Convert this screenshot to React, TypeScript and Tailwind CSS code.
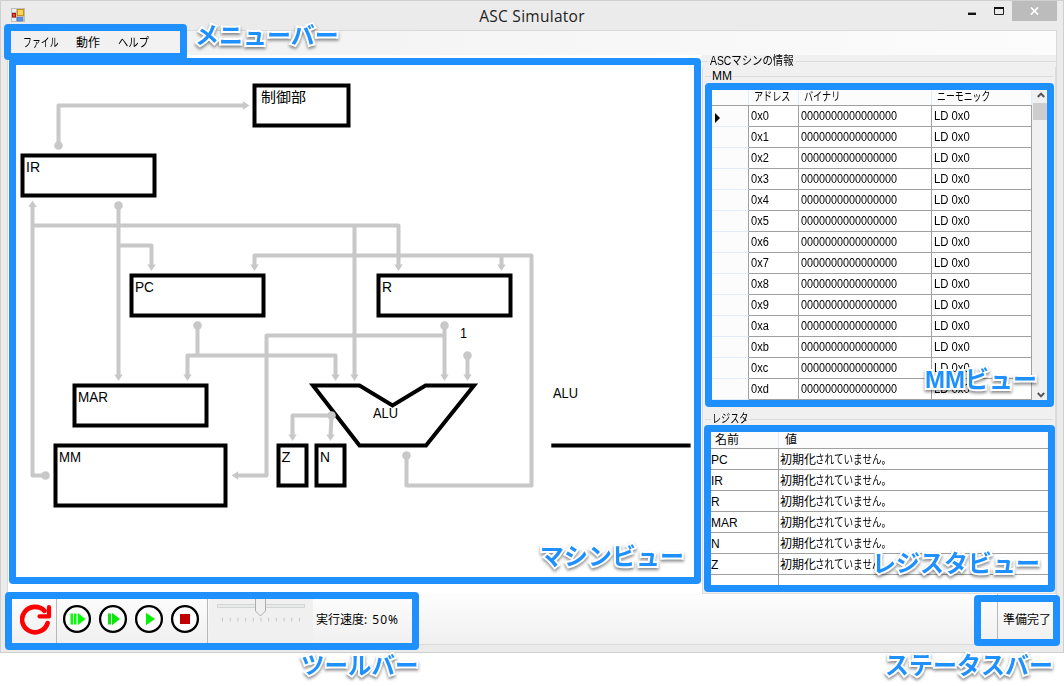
import React from "react";

type Point = [number, number];

const addresses = ["0x0", "0x1", "0x2", "0x3", "0x4", "0x5", "0x6", "0x7", "0x8", "0x9", "0xa", "0xb", "0xc", "0xd"];
const registers = ["PC", "IR", "R", "MAR", "N", "Z"];

/* ---------- machine diagram ---------- */

const nodes: { label: string; x: number; y: number; w: number; h: number; tx: number; ty: number; tw: number }[] = [
  { label: "制御部", x: 254.5, y: 85.5, w: 94, h: 40, tx: 261, ty: 102, tw: 45 },
  { label: "IR", x: 22.5, y: 155.5, w: 132, h: 40, tx: 26, ty: 172, tw: 14 },
  { label: "PC", x: 131.5, y: 275.5, w: 132, h: 40, tx: 135, ty: 292, tw: 19 },
  { label: "R", x: 378.5, y: 275.5, w: 132, h: 40, tx: 382, ty: 292, tw: 10 },
  { label: "MAR", x: 74.5, y: 385.5, w: 132, h: 40, tx: 78, ty: 402, tw: 30 },
  { label: "MM", x: 55.5, y: 445.5, w: 170, h: 60, tx: 59, ty: 462, tw: 22 },
  { label: "Z", x: 278.5, y: 445.5, w: 28, h: 40, tx: 281.5, ty: 462, tw: 9 },
  { label: "N", x: 316.5, y: 445.5, w: 28, h: 40, tx: 320, ty: 462, tw: 10 },
];

const wires: Point[][] = [
  [[58.5, 145.5], [58.5, 105.5], [244, 105.5]],
  [[45.5, 475.5], [32.5, 475.5], [32.5, 206]],
  [[32.5, 225.5], [398.5, 225.5], [398.5, 266]],
  [[354.5, 225.5], [354.5, 376]],
  [[118.5, 205.5], [118.5, 376]],
  [[118.5, 245.5], [151.5, 245.5], [151.5, 266]],
  [[406.5, 455.5], [406.5, 485.5], [531.5, 485.5], [531.5, 255.5], [254.5, 255.5], [254.5, 266]],
  [[501.5, 255.5], [501.5, 266]],
  [[197.5, 325.5], [197.5, 355.5]],
  [[187.5, 376], [187.5, 355.5], [335.5, 355.5], [335.5, 376]],
  [[444.5, 325.5], [444.5, 376]],
  [[444.5, 335.5], [266.5, 335.5], [266.5, 475.5], [238, 475.5]],
  [[467.5, 355.5], [467.5, 376]],
  [[331.5, 415.5], [292.5, 415.5], [292.5, 436]],
  [[331.5, 415.5], [330.5, 436]],
];

const dots: Point[] = [
  [58.5, 145.5], [45.5, 475.5], [118.5, 205.5], [406.5, 455.5], [197.5, 325.5], [444.5, 325.5], [467.5, 355.5], [331.5, 415.5],
];

const arrows: [number, number, number][] = [
  [249.5, 105.5, -90], [32.5, 200.5, 180], [398.5, 271, 0], [354.5, 381, 0], [118.5, 381, 0], [151.5, 271, 0],
  [254.5, 271, 0], [501.5, 271, 0], [187.5, 381, 0], [335.5, 381, 0], [444.5, 381, 0], [231.5, 475.5, 90],
  [467.5, 381, 0], [292.5, 441, 0], [330.5, 441, 0],
];

function MachineDiagram() {
  return (
    <svg
      className="block font-['Liberation_Sans','Noto_Sans_CJK_JP',sans-serif] text-[14px]"
      width="686"
      height="532"
      viewBox="8 55 686 532"
    >
      <g fill="none" stroke="#000" strokeWidth="4">
        {nodes.map((n) => (
          <rect key={n.label} x={n.x} y={n.y} width={n.w} height={n.h} />
        ))}
        <path d="M313 385.5H359.5L392.5 405.5L425.5 385.5H474L426 445.5H359.5Z" strokeLinejoin="miter" strokeMiterlimit="3" />
        <path d="M551.3 445.5H690.6" />
      </g>
      <g fill="none" stroke="#c8c8c8" strokeWidth="4" strokeLinejoin="round">
        {wires.map((w, i) => (
          <polyline key={i} points={w.map((p) => p.join(",")).join(" ")} />
        ))}
      </g>
      <g fill="#c8c8c8">
        {dots.map(([x, y], i) => (
          <circle key={i} cx={x} cy={y} r="4.3" />
        ))}
        {arrows.map(([x, y, a], i) => (
          <path key={i} d="M0 0L-4.2 -6.6H4.2Z" transform={`translate(${x} ${y}) rotate(${a})`} />
        ))}
      </g>
      {nodes.map((n) => (
        <text key={n.label} x={n.tx} y={n.ty} textLength={n.tw} lengthAdjust="spacingAndGlyphs">
          {n.label}
        </text>
      ))}
      <text x="373" y="418" textLength="25" lengthAdjust="spacingAndGlyphs">ALU</text>
      <text x="553" y="398" textLength="25" lengthAdjust="spacingAndGlyphs">ALU</text>
      <text x="460" y="338" textLength="7" lengthAdjust="spacingAndGlyphs">1</text>
    </svg>
  );
}

/* ---------- chrome ---------- */

function AppIcon() {
  return (
    <svg className="block" width="14" height="14" viewBox="0 0 14 14">
      <rect width="14" height="14" fill="#bdbdbd" />
      <rect x="1" y="1" width="4" height="3" fill="#eee" />
      <rect x="1" y="10" width="4" height="3" fill="#eee" />
      <rect x="6.5" y="1.5" width="6" height="6" fill="#ffd35a" stroke="#c99112" />
      <rect x="1.5" y="5.5" width="3" height="3.5" fill="#e2553c" stroke="#a81508" />
      <rect x="6" y="9.5" width="5.5" height="3.5" fill="#5a93e6" stroke="#3f6fc4" strokeWidth=".6" />
    </svg>
  );
}

function TitleBar() {
  return (
    <div className="flex h-[29px] shrink-0 items-start">
      <div className="w-[60px] pl-[10px] pt-[7px]">
        <AppIcon />
      </div>
      <div className="flex-1 pl-[36px] pt-[4px] text-center font-['Open_Sans',sans-serif] text-[15.5px] leading-[22px] tracking-[0.27px] text-[#222]">
        ASC Simulator
      </div>
      <div className="flex w-[96px] items-start">
        <svg className="block" width="45" height="22" viewBox="0 0 45 22">
          <path d="M1 12.8H9" stroke="#111" strokeWidth="2.4" />
          <path d="M27.5 6.5H36.5V13.5H27.5Z" fill="none" stroke="#222" />
          <path d="M27 7H37" stroke="#111" strokeWidth="2" />
        </svg>
        <div className="flex h-[20px] w-[45px] items-center justify-center bg-[#bcbcbc]">
          <svg className="block" width="9" height="8" viewBox="0 0 9 8">
            <path d="M1 .5L8 7.5M8 .5L1 7.5" stroke="#fff" strokeWidth="1.7" />
          </svg>
        </div>
      </div>
    </div>
  );
}

function MenuBar() {
  return (
    <div className="flex h-[24px] shrink-0 items-center bg-linear-to-r from-[#f0f0f0] to-[#fcfcfc] pl-[15px] text-[12px] leading-[24px]">
      <div className="w-[53px]"><span className="inline-block origin-left scale-x-[0.74] whitespace-nowrap">ファイル</span></div>
      <div className="w-[42px]">動作</div>
      <div><span className="inline-block origin-left scale-x-[0.86] whitespace-nowrap">ヘルプ</span></div>
    </div>
  );
}

/* ---------- right hand side ---------- */

function GroupTitle({ children, className }: { children: React.ReactNode; className: string }) {
  return (
    <div className={"flex items-center text-[12px] " + className}>
      <div className="h-px w-[6px] bg-[#dcdcdc]" />
      {children}
      <div className="h-px flex-1 bg-[#dcdcdc]" />
    </div>
  );
}

function MemoryTable() {
  return (
    <div className="flex h-[318px] overflow-hidden bg-[#f0f0f0]">
      <div className="w-[323px] shrink-0">
        <div className="flex h-[22px] whitespace-nowrap border-b border-[#a0a0a0] bg-[#fcfcfc] pt-px leading-[24px]">
          <div className="w-[40px] border-r border-[#e0ecf8]" />
          <div className="w-[50px] border-r border-[#e0ecf8] pl-[5px]"><span className="inline-block origin-left scale-x-[0.76]">アドレス</span></div>
          <div className="w-[133px] border-r border-[#e0ecf8] pl-[5px]"><span className="inline-block origin-left scale-x-[0.76]">バイナリ</span></div>
          <div className="w-[100px] border-r border-[#e0ecf8] pl-[5px]"><span className="inline-block origin-left scale-x-[0.74]">ニーモニック</span></div>
        </div>
        {addresses.map((a, i) => (
          <div key={a} className="flex h-[21px] bg-white leading-[20px]">
            <div className="flex w-[40px] items-center border-b border-r border-b-[#e3edf9] border-r-[#a0a0a0] bg-[#fcfcfc] pl-[6px] pt-[3px]">
              {i === 0 && (
                <svg className="block" width="5" height="10" viewBox="0 0 5 10"><path d="M0 0L5 5L0 10Z" /></svg>
              )}
            </div>
            <div className="w-[50px] border-b border-r border-[#a0a0a0] pl-[2px]"><span className="inline-block origin-left scale-x-[0.92]">{a}</span></div>
            <div className="w-[133px] border-b border-r border-[#a0a0a0] pl-[2px]"><span className="inline-block origin-left scale-x-90">0000000000000000</span></div>
            <div className="w-[100px] border-b border-r border-[#a0a0a0] pl-[2px]"><span className="inline-block origin-left scale-x-[0.94] whitespace-pre">LD 0x0</span></div>
          </div>
        ))}
        <div className="flex h-[6px] bg-white">
          <div className="w-[40px] border-r border-[#a0a0a0]" />
          <div className="w-[50px] border-r border-[#a0a0a0]" />
          <div className="w-[133px] border-r border-[#a0a0a0]" />
          <div className="w-[100px] border-r border-[#a0a0a0]" />
        </div>
      </div>
      <div className="flex w-[17px] shrink-0 flex-col items-center bg-[#f0f0f0]">
        <svg className="mt-[8px] block" width="8" height="6" viewBox="0 0 8 6"><path d="M.8 5L4 1.6L7.2 5" fill="none" stroke="#555" strokeWidth="2" /></svg>
        <div className="mt-[5px] h-[17px] w-[15px] bg-[#cdcdcd]" />
        <div className="flex-1" />
        <svg className="mb-[4px] block" width="8" height="6" viewBox="0 0 8 6"><path d="M.8 1L4 4.4L7.2 1" fill="none" stroke="#555" strokeWidth="2" /></svg>
      </div>
    </div>
  );
}

function RegisterTable() {
  return (
    <div className="flex h-[157px] flex-col overflow-hidden bg-white">
      <div className="flex h-[20px] border-b border-[#a0a0a0] bg-[#fcfcfc] leading-[22px]">
        <div className="w-[71px] border-r border-[#e0ecf8] pl-[7px]">名前</div>
        <div className="pl-[6px]">値</div>
      </div>
      {registers.map((r) => (
        <div key={r} className="flex h-[21px] shrink-0 border-b border-[#a0a0a0] leading-[22px]">
          <div className="w-[71px] border-r border-[#a0a0a0] pl-[3px]">{r}</div>
          <div className="flex whitespace-nowrap pl-px">
            <span className="inline-block w-[35px]">初期化</span>
            <span className="inline-block origin-left scale-x-[0.8]">されていません。</span>
          </div>
        </div>
      ))}
      <div className="w-[71px] flex-1 border-r border-[#a0a0a0]" />
    </div>
  );
}

function InfoPanel() {
  return (
    <div className="flex w-[354px] flex-col bg-[#f0f0f0]">
      <GroupTitle className="h-[12px]">
        <span className="w-[88px] pl-[2px]">
          <span className="inline-block origin-left scale-x-[0.865] whitespace-nowrap leading-[12px]">ASCマシンの情報</span>
        </span>
      </GroupTitle>
      <div className="flex flex-1 flex-col border-b border-l border-r border-[#dcdcdc] px-[2px]">
        <GroupTitle className="mt-[4px] h-[11px]"><span className="w-[21px] pl-px leading-[11px]">MM</span></GroupTitle>
        <div className="mt-[2px] pl-[4px]"><MemoryTable /></div>
        <GroupTitle className="mt-[10px] h-[14px]">
          <span className="w-[38px] pl-px"><span className="inline-block origin-left scale-x-[0.76] whitespace-nowrap leading-[14px]">レジスタ</span></span>
        </GroupTitle>
        <div className="mt-[3px] pl-[3px] pr-[2px]"><RegisterTable /></div>
      </div>
    </div>
  );
}

/* ---------- bottom bar ---------- */

function RoundButton({ children }: { children: React.ReactNode }) {
  return (
    <svg className="block" width="36" height="30" viewBox="-18 -15 36 30">
      <circle r="12.9" fill="#fff" stroke="#000" strokeWidth="2.3" />
      {children}
    </svg>
  );
}

function Toolbar() {
  return (
    <div className="flex h-[50px] shrink-0 items-stretch bg-linear-to-b from-[#fdfdfd] to-[#f0f0f0] text-[12px]">
      <div className="flex w-[49px] items-center border-r border-[#b8b8b8] pl-[12px] pt-px">
        <svg className="block" width="32" height="32" viewBox="19 603 32 32">
          <path d="M46.6 622A13 12.7 0 1 1 43.5 609.8" fill="none" stroke="#f00" strokeWidth="4.6" strokeLinecap="round" />
          <path d="M48 606V615.4H38.5" fill="none" stroke="#f00" strokeWidth="4.2" strokeLinejoin="round" strokeLinecap="round" />
        </svg>
      </div>
      <div className="flex w-[151px] items-center border-r border-[#b8b8b8] pl-[2px]">
        <RoundButton>
          <path d="M-6.5 -5.5H-4V5.5H-6.5ZM-3 -5.5H-.5V5.5H-3ZM1 -6L8.5 0L1 6Z" fill="#0f0" />
        </RoundButton>
        <RoundButton>
          <path d="M-5 -5.5H-2V5.5H-5ZM-1 -6.2L7 0L-1 6.2Z" fill="#06e806" />
        </RoundButton>
        <RoundButton>
          <path d="M-3 -6.2L6 0L-3 6.2Z" fill="#06f006" />
        </RoundButton>
        <RoundButton>
          <rect x="-5" y="-5" width="10" height="10" fill="#c00000" />
        </RoundButton>
      </div>
      <div className="ml-px w-[104px] bg-[#f0f0f0] pt-px">
        <svg className="block" width="104" height="40" viewBox="209 595 104 40">
          <rect x="217.5" y="604.5" width="87" height="3" fill="#e7eaea" stroke="#d5d5d5" />
          {Array.from({ length: 11 }, (_, i) => (
            <path key={i} d={`M${222.5 + i * 7.7} 618V621.5`} stroke="#c4c4c4" />
          ))}
          <path d="M255.5 597.5H265.5V611L260.5 616L255.5 611Z" fill="#f0f0f0" stroke="#adadad" />
        </svg>
      </div>
      <div className="flex items-center pl-[3px] pt-[2px] font-['Noto_Sans','Noto_Sans_CJK_JP',sans-serif]">
        <span className="whitespace-pre">実行速度<span className="tracking-[1px]">: 50%</span></span>
      </div>
      <div className="flex-1" />
      <div className="flex w-[59px] items-center border-l border-[#b8b8b8] pl-[5px] pt-[2px]">準備完了</div>
    </div>
  );
}

/* ---------- callouts laid over the window ---------- */

function Frame({ className }: { className: string }) {
  return <div className={"absolute rounded-[4px] border-[7px] border-[#1e90ff] " + className} />;
}

function Callout({ className, children }: { className: string; children: React.ReactNode }) {
  return (
    <div
      className={
        "absolute whitespace-nowrap text-[24px] font-bold leading-[24px] text-[#1e90ff] [-webkit-text-stroke:4px_white] [paint-order:stroke_fill] [filter:drop-shadow(0_2px_1.5px_rgba(0,0,0,0.45))] " +
        className
      }
    >
      {children}
    </div>
  );
}

export default function App() {
  return (
    <div className="relative h-[686px] w-[1064px] overflow-hidden bg-white font-['Liberation_Sans','Noto_Sans_CJK_JP',sans-serif] text-[12px] text-black">
      <div className="flex h-[653px] w-[1064px] flex-col border border-[#cfcfcf] bg-[#ebebeb]">
        <TitleBar />
        <div className="mx-[6px] mb-[7px] flex min-h-0 flex-1 flex-col border border-[#dadada] bg-white">
          <MenuBar />
          <div className="flex min-h-0 flex-1">
            <div className="min-w-0 flex-1 overflow-hidden bg-white"><MachineDiagram /></div>
            <InfoPanel />
          </div>
          <Toolbar />
        </div>
      </div>

      <Frame className="left-[9px] top-[58px] h-[526px] w-[692px]" />
      <Frame className="left-[4px] top-[24px] h-[36px] w-[183px]" />
      <Frame className="left-[705px] top-[83px] h-[324px] w-[349px]" />
      <Frame className="left-[704px] top-[425px] h-[167px] w-[351px]" />
      <Frame className="left-[5px] top-[592px] h-[58px] w-[414px]" />
      <Frame className="left-[974px] top-[595px] h-[51px] w-[86px]" />

      <Callout className="left-[195px] top-[24px]">メニューバー</Callout>
      <Callout className="left-[540px] top-[545px]">マシンビュー</Callout>
      <Callout className="left-[925px] top-[368px]">MMビュー</Callout>
      <Callout className="left-[872px] top-[552px]">レジスタビュー</Callout>
      <Callout className="left-[301px] top-[654px] origin-left scale-x-[0.98]">ツールバー</Callout>
      <Callout className="left-[885px] top-[654px]">ステータスバー</Callout>
    </div>
  );
}
